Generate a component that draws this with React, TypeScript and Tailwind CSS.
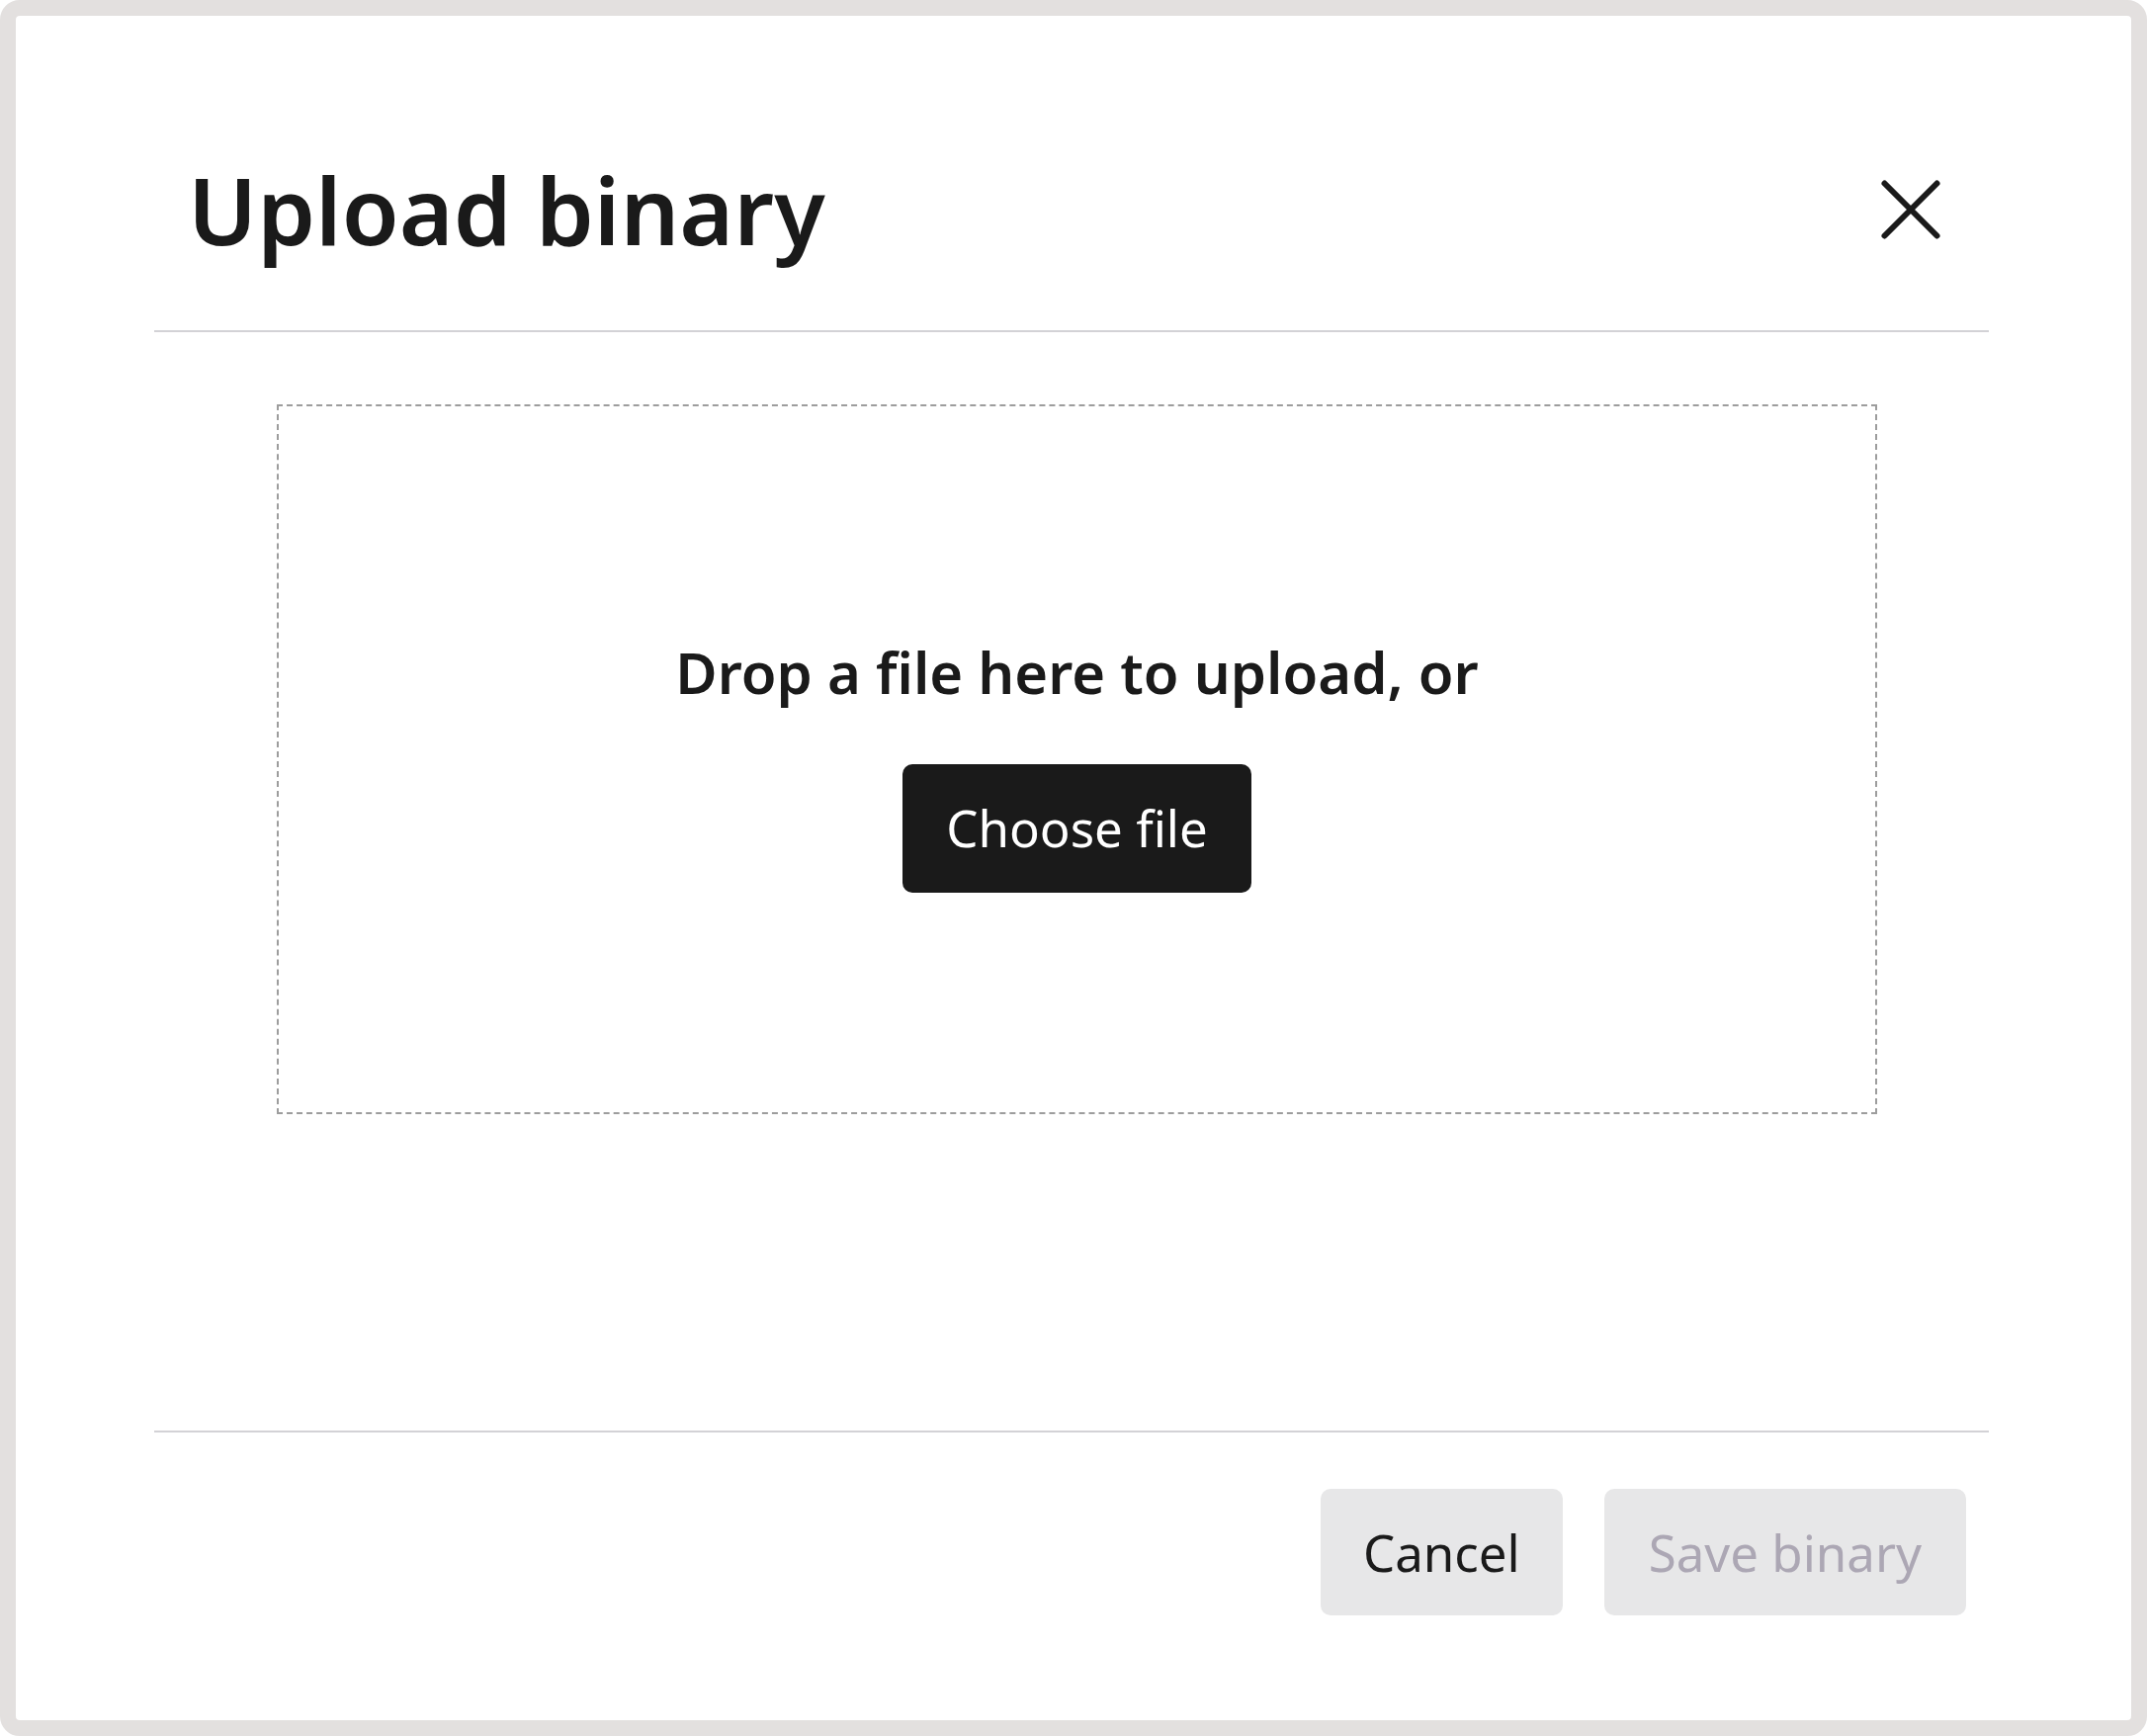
function CloseIcon() {
  return (
    <svg width="64" height="64" viewBox="0 0 64 64" fill="none" aria-hidden="true">
      <path d="M5.5 5.5 L58.5 58.5 M58.5 5.5 L5.5 58.5" stroke="#1a1a1a" strokeWidth="6" strokeLinecap="round" />
    </svg>
  );
}

export default function App() {
  return (
    <div className="h-[1756px] w-[2172px] bg-white font-['Noto_Sans',sans-serif] text-[#1a1a1a]">
      <div className="h-full w-full rounded-[20px] border-[16px] border-[#e3e0df] bg-white pl-[140px] pr-[144px]">
        {/* header */}
        <div className="flex items-center justify-between border-b-2 border-[#d3d2d6] pb-[58px] pl-[34px] pr-[47px] pt-[132px]">
          <h2 className="text-[94px] font-semibold leading-[128px]">Upload binary</h2>
          <button type="button" aria-label="Close">
            <CloseIcon />
          </button>
        </div>

        {/* drop zone */}
        <div className="h-[1111px] pl-[124px] pt-[73px]">
          <div className="flex h-[718px] w-[1619px] flex-col items-center justify-center border-2 border-dashed border-[#9d9d9d] pt-[6px]">
            <p className="text-[58px] font-semibold leading-[79px]">Drop a file here to upload, or</p>
            <button
              type="button"
              className="mt-[54px] flex h-[130px] items-center rounded-[10px] bg-[#1a1a1a] px-[44px] text-[51px] text-white"
            >
              Choose file
            </button>
          </div>
        </div>

        {/* footer */}
        <div className="flex justify-end gap-[42px] border-t-2 border-[#d3d2d6] pb-[106px] pr-[23px] pt-[57px]">
          <button
            type="button"
            className="flex h-[128px] items-center rounded-[10px] bg-[#e7e7e8] px-[43px] text-[51px]"
          >
            Cancel
          </button>
          <button
            type="button"
            disabled
            className="flex h-[128px] items-center rounded-[10px] bg-[#e7e7e8] px-[45px] text-[51px] text-[#aca7b4]"
          >
            Save binary
          </button>
        </div>
      </div>
    </div>
  );
}
